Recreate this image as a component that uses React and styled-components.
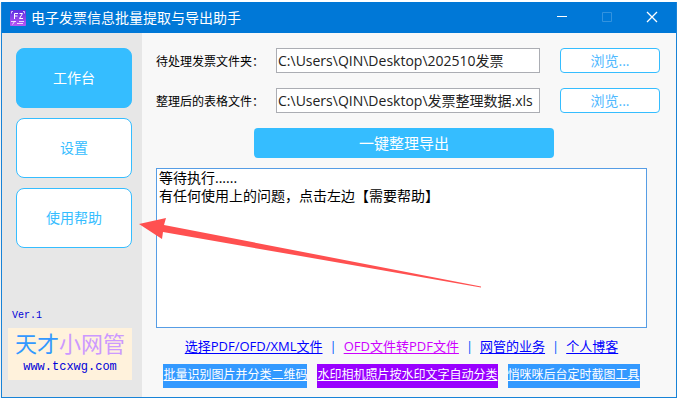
import { useState } from 'react';
import styled, { createGlobalStyle } from 'styled-components';


const menu = ['工作台', '设置', '使用帮助'];

const links = [
    { text: '选择PDF/OFD/XML文件', color: '#0000ff' },
    { text: 'OFD文件转PDF文件', color: '#cc00ff' },
    { text: '网管的业务', color: '#0000ff' },
    { text: '个人博客', color: '#0000ff' },
];

const tools = [
    { text: '批量识别图片并分类二维码', color: '#3399ff' },
    { text: '水印相机照片按水印文字自动分类', color: '#9900ff' },
    { text: '悄咪咪后台定时截图工具', color: '#3399ff' },
];

export default function App() {
    const [active, setActive] = useState('工作台');
    const [folder, setFolder] = useState('C:\\Users\\QIN\\Desktop\\202510发票');
    const [table, setTable] = useState('C:\\Users\\QIN\\Desktop\\发票整理数据.xls');

    return (
        <Window>
            <GlobalStyle />
            <TitleBar>
                <AppIcon />
                <h1>电子发票信息批量提取与导出助手</h1>
                <WindowButton aria-label="最小化">
                    <svg width="12" height="12"><path d="M1 5.5H11" /></svg>
                </WindowButton>
                <WindowButton aria-label="最大化" disabled>
                    <svg width="12" height="12"><path d="M1.5 1.5H10.5V10.5H1.5Z" /></svg>
                </WindowButton>
                <WindowButton aria-label="关闭">
                    <svg width="12" height="12"><path d="M1 1L11 11M11 1L1 11" strokeWidth="1.3" /></svg>
                </WindowButton>
            </TitleBar>
            <Body>
                <Sidebar>
                    {menu.map((item) => (
                        <MenuButton key={item} $active={item === active} onClick={() => setActive(item)}>
                            {item}
                        </MenuButton>
                    ))}
                    <Version>Ver.1</Version>
                    <Brand href="#site">
                        <strong>天才<em>小网管</em></strong>
                        <span>www.tcxwg.com</span>
                    </Brand>
                </Sidebar>
                <Main>
                    <Row>
                        <label htmlFor="folder">待处理发票文件夹：</label>
                        <input id="folder" value={folder} onChange={(e) => setFolder(e.target.value)} />
                        <BrowseButton>浏览...</BrowseButton>
                    </Row>
                    <Row>
                        <label htmlFor="table">整理后的表格文件：</label>
                        <input id="table" value={table} onChange={(e) => setTable(e.target.value)} />
                        <BrowseButton>浏览...</BrowseButton>
                    </Row>
                    <ExportRow>
                        <ExportButton>一键整理导出</ExportButton>
                    </ExportRow>
                    <Output>
                        <Log
                            aria-label="执行日志"
                            readOnly
                            value={'等待执行......\n有任何使用上的问题，点击左边【需要帮助】'}
                        />
                        <Links>
                            {links.map((link) => (
                                <li key={link.text}>
                                    <TextLink href="#link" $color={link.color}>{link.text}</TextLink>
                                </li>
                            ))}
                        </Links>
                        <Tools>
                            {tools.map((tool) => (
                                <ToolLink key={tool.text} href="#tool" $color={tool.color}>{tool.text}</ToolLink>
                            ))}
                        </Tools>
                    </Output>
                </Main>
                <Arrow width="343" height="70" viewBox="0 0 343 70" aria-hidden="true">
                    <path d="M0 6L27 0L25 7L342 68.5V69.5L24 14L23 21Z" />
                </Arrow>
            </Body>
        </Window>
    );
}

function AppIcon() {
    return (
        <svg width="16" height="16" viewBox="0 0 16 16" aria-hidden="true">
            <defs>
                <linearGradient id="iconFill" x1="0" y1="0" x2="0" y2="1">
                    <stop offset="0" stopColor="#5a2fe0" />
                    <stop offset="1" stopColor="#b957f5" />
                </linearGradient>
            </defs>
            <rect width="16" height="16" rx="1" fill="url(#iconFill)" />
            <g fill="none" stroke="#fff" strokeWidth="1">
                <path d="M4.5 9V3.5H8M4.5 6H7.5M9.5 3.5H12.5L9.5 8.5H13" />
                <path d="M1.5 3.5V1.5H3M13 1.5H14.5V3.5" opacity="0.7" />
                <path d="M1 11.5H6M9 11.5H14M4.5 11.5L2.5 14.5M7 13.5H13" opacity="0.8" />
            </g>
        </svg>
    );
}


/**************************** css ****************************/

const GlobalStyle = createGlobalStyle`
    * {
        box-sizing: border-box;
    }

    body {
        margin: 0;
        background-color: #ffffff;
    }

    body, button, input, textarea {
        font-family: "Open Sans", "Noto Sans CJK SC", sans-serif;
    }

    button {
        padding: 0 0 2px;
        cursor: pointer;
    }
`

const Window = styled.div`
    margin: 2px 0 0 1px;
    border: 1px solid #1883d7;
    border-top: none;
    box-shadow: 0 1px 1px #b8b8b8;
`

const TitleBar = styled.header`
    height: 31px;
    padding: 0 2px 0 8px;
    background-color: #0078d7;
    display: flex;
    align-items: center;

    h1 {
        flex: 1;
        margin: 0 0 0 5px;
        font-weight: 400;
        font-size: 14px;
        line-height: 20px;
        color: #ffffff;
    }
`

const WindowButton = styled.button`
    width: 45px;
    height: 31px;
    border: none;
    background: none;
    display: flex;
    align-items: center;
    justify-content: center;

    svg {
        fill: none;
        stroke: #ffffff;
    }

    &:disabled svg {
        stroke: #3393df;
    }
`

const Body = styled.div`
    position: relative;
    display: grid;
    grid-template-columns: 140px 1fr;
    background-color: #f8f8f8;
`

const Sidebar = styled.nav`
    padding: 15px 10px 17px 14px;
    background-color: #e7e7e7;
    display: flex;
    flex-direction: column;
    gap: 10px;
`

const MenuButton = styled.button`
    height: 60px;
    border: 1px solid #35bdff;
    border-radius: 8px;
    background-color: ${({ $active }) => ($active ? '#35bdff' : '#ffffff')};
    font-size: 14px;
    color: ${({ $active }) => ($active ? '#ffffff' : '#35bdff')};
`

const Version = styled.span`
    margin: auto 0 -4px -4px;
    font-family: "Liberation Mono", monospace;
    font-size: 10px;
    line-height: 12px;
    color: #0000d8;
`

const Brand = styled.a`
    height: 52px;
    margin-left: -8px;
    background-color: #fff2dc;
    display: flex;
    flex-direction: column;
    align-items: center;
    text-decoration: none;

    strong {
        font-size: 22px;
        line-height: 30px;
        font-weight: 400;
        color: #3399ff;
    }

    em {
        font-style: normal;
        color: #cc99ff;
    }

    span {
        font-family: "Liberation Mono", monospace;
        font-size: 12px;
        line-height: 18px;
        color: #0000d8;
    }
`

const Main = styled.main`
    padding: 15px 16px 9px 14px;
    display: flex;
    flex-direction: column;
`

const Row = styled.div`
    margin-bottom: 15px;
    display: flex;
    align-items: center;

    label {
        width: 120px;
        font-size: 12px;
        color: #000000;
    }

    input {
        flex: 1;
        min-width: 0;
        height: 25px;
        padding: 0 1px 2px;
        border: 1px solid #abadb3;
        background-color: #ffffff;
        font-size: 14px;
        color: #222222;
        outline: none;
    }
`

const BrowseButton = styled.button`
    width: 100px;
    height: 25px;
    margin-left: 20px;
    border: 1px solid #35bdff;
    border-radius: 4px;
    background-color: #ffffff;
    font-size: 14px;
    color: #4db8ff;
`

const ExportRow = styled.div`
    padding-right: 8px;
    display: flex;
    justify-content: center;
`

const ExportButton = styled.button`
    width: 300px;
    height: 30px;
    border: none;
    border-radius: 4px;
    background-color: #35bdff;
    font-size: 15px;
    color: #ffffff;
`

const Output = styled.section`
    padding: 10px 13px 0 0;
    display: flex;
    flex-direction: column;
`

const Log = styled.textarea`
    width: 100%;
    height: 160px;
    padding: 0 2px;
    border: 1px solid #569de5;
    background-color: #ffffff;
    font-size: 14px;
    line-height: 18px;
    color: #000000;
    resize: none;
    outline: none;
`

const Links = styled.ul`
    height: 36px;
    margin: 0;
    padding: 0;
    list-style: none;
    display: flex;
    align-items: center;
    justify-content: center;
    font-size: 13px;
    line-height: 18px;
    white-space: nowrap;

    li + li::before {
        content: '|';
        margin: 0 7px;
        color: #0055ff;
    }
`

const TextLink = styled.a`
    color: ${({ $color }) => $color};
    text-underline-offset: 2px;
`

const Tools = styled.div`
    display: flex;
    justify-content: center;
    gap: 10px;
`

const ToolLink = styled.a`
    height: 24px;
    background-color: ${({ $color }) => $color};
    font-size: 12px;
    line-height: 22px;
    color: #ffffff;
    white-space: nowrap;
    text-underline-offset: 1px;
`

const Arrow = styled.svg`
    position: absolute;
    left: 137px;
    top: 185px;
    pointer-events: none;

    path {
        fill: #ff5050;
    }
`
